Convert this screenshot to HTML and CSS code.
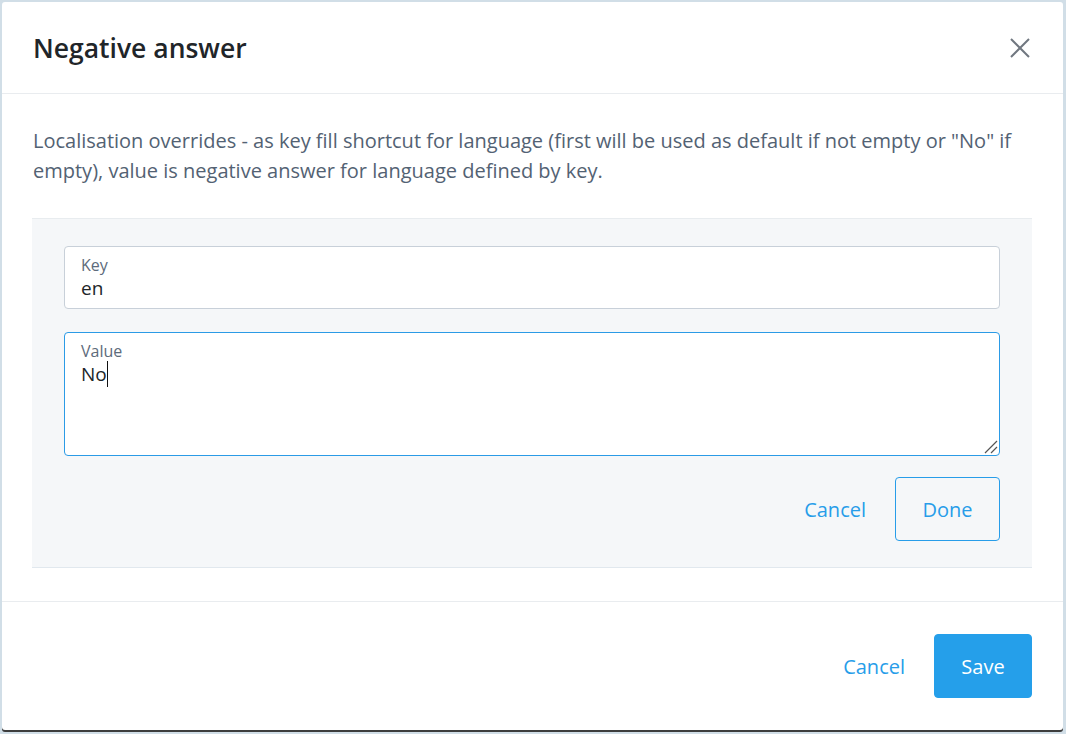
FILE: index.html
```html
<!DOCTYPE html>
<html>
<head>
<title>Negative answer</title>
<link rel="stylesheet" href="styles.css">
</head>
<body>
<div class="modal">
    <div class="modal-header">
        <h1 class="modal-title">Negative answer</h1>
        <button class="btn-close" type="button" aria-label="Close">
            <svg width="20" height="20" viewBox="0 0 20 20">
                <path d="M1 1L19 19M19 1L1 19" stroke="#707780" stroke-width="2" fill="none"/>
            </svg>
        </button>
    </div>
    <div class="modal-body">
        <p class="hint">Localisation overrides - as key fill shortcut for language (first will be used as default if not empty or "No" if empty), value is negative answer for language defined by key.</p>
        <div class="editor">
            <div class="field">
                <label class="field-label">Key</label>
                <div class="field-input">en</div>
            </div>
            <div class="field field-area focused">
                <label class="field-label">Value</label>
                <div class="field-input">No<span class="caret"></span></div>
                <svg class="grip" width="14" height="14" viewBox="0 0 14 14">
                    <path d="M1 13L13 1M7 13L13 7" stroke="#555" stroke-width="1.2" fill="none"/>
                </svg>
            </div>
            <div class="editor-actions">
                <button class="btn btn-link" type="button">Cancel</button>
                <button class="btn btn-outline" type="button">Done</button>
            </div>
        </div>
    </div>
    <div class="modal-footer">
        <button class="btn btn-link" type="button">Cancel</button>
        <button class="btn btn-primary" type="button">Save</button>
    </div>
</div>
</body>
</html>
```

FILE: styles.css
```css
html, body {
    margin: 0;
    padding: 0;
    height: 100%;
}
body {
    background-color: #d1dee7;
    font-family: "Open Sans", "Noto Sans", sans-serif;
    color: #212529;
    padding: 2px 3px 2px 2px;
    box-sizing: border-box;
}
.modal {
    background-color: white;
    height: 728px;
    border-radius: 3px;
    box-shadow: 0 2px 0 #3d3d3d;
    display: flex;
    flex-direction: column;
}
.modal-header {
    height: 92px;
    border-bottom: 1px solid #e9ecef;
    display: flex;
    align-items: center;
    justify-content: space-between;
    padding: 0 33px 0 31px;
    box-sizing: border-box;
}
.modal-title {
    margin: 0;
    font-size: 26.5px;
    font-weight: 600;
    color: #212529;
}
.btn-close {
    border: 0;
    background: none;
    padding: 0;
    width: 20px;
    height: 20px;
    cursor: pointer;
}
.btn-close svg {
    display: block;
}
.modal-body {
    padding: 32px 31px 33px 30px;
    border-bottom: 1px solid #e9ecef;
}
.hint {
    margin: 0 0 32px 1px;
    font-size: 20px;
    line-height: 30px;
    color: #536273;
}
.editor {
    background-color: #f5f7f9;
    border-top: 1px solid #e8ecef;
    border-bottom: 1px solid #e1e8ee;
    padding: 27px 32px 26px 32px;
}
.field {
    position: relative;
    background-color: white;
    border: 1px solid #c8d0d9;
    border-radius: 4px;
    padding: 8px 16px 8px 16px;
    height: 63px;
    box-sizing: border-box;
}
.field + .field {
    margin-top: 23px;
}
.field-area {
    height: 124px;
}
.field.focused {
    border-color: #2b9be6;
}
.field-label {
    display: block;
    font-size: 16px;
    line-height: 20px;
    color: #5d6b7b;
}
.field-input {
    font-size: 19px;
    line-height: 26px;
    color: #212529;
}
.caret {
    display: inline-block;
    width: 1px;
    height: 26px;
    background-color: #111;
    vertical-align: -6px;
}
.grip {
    position: absolute;
    right: 1px;
    bottom: 1px;
}
.editor-actions {
    display: flex;
    justify-content: flex-end;
    align-items: center;
    margin-top: 21px;
    gap: 28px;
}
.btn {
    font-family: inherit;
    font-size: 20px;
    height: 64px;
    border-radius: 4px;
    cursor: pointer;
    background: none;
    border: 1px solid transparent;
    color: #279de9;
    padding: 0 20px;
}
.btn-link {
    padding: 0;
}
.btn-outline {
    border-color: #279de9;
    width: 105px;
}
.btn-primary {
    background-color: #259fea;
    border-color: #259fea;
    color: white;
    width: 98px;
}
.modal-footer {
    flex: 1;
    display: flex;
    justify-content: flex-end;
    align-items: flex-start;
    padding: 32px 31px 0 0;
    gap: 28px;
}
```
